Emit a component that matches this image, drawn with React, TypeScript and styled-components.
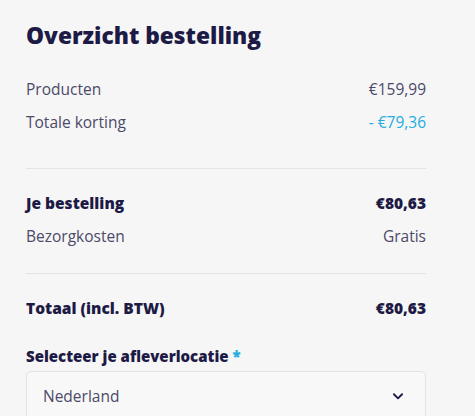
import React from "react";
import styled, { createGlobalStyle } from "styled-components";

const Global = createGlobalStyle`
  html, body { margin: 0; padding: 0; background: #f6f6f6; }
  body { font-family: "Open Sans", "Noto Sans", sans-serif; -webkit-font-smoothing: antialiased; }
`;

const Panel = styled.div`
  width: 400px;
  padding: 20px 26px 0 26px;
  color: #1d1a45;
`;

const Title = styled.h2`
  margin: 0 0 26px 0;
  font-size: 22.7px;
  line-height: 32px;
  font-weight: 800;
  color: #1d1a45;
`;

const Group = styled.div<{ $tail: number }>`
  display: flex;
  flex-direction: column;
  gap: 10px;
  padding: 0 0 ${(p) => p.$tail}px 0;
`;

const Row = styled.div<{ $strong?: boolean }>`
  display: flex;
  justify-content: space-between;
  align-items: center;
  font-size: 15.5px;
  line-height: 23px;
  font-weight: ${(p) => (p.$strong ? 800 : 400)};
  color: ${(p) => (p.$strong ? "#1d1a45" : "#4c4a68")};
`;

const Value = styled.span<{ $accent?: boolean }>`
  color: ${(p) => (p.$accent ? "#23acdf" : "inherit")};
`;

const Divider = styled.hr`
  margin: 0 0 23px 0;
  border: 0;
  border-top: 1px solid #e4e4e6;
`;

const Label = styled.div`
  margin-top: 25px;
  font-size: 15px;
  line-height: 23px;
  font-weight: 800;
  color: #1d1a45;
`;

const Required = styled.span`
  color: #23acdf;
  margin-left: 4px;
`;

const Select = styled.div`
  margin-top: 3px;
  height: 50px;
  box-sizing: border-box;
  border: 1px solid #e3e3e6;
  border-radius: 5px;
  background: #f8f8f8;
  display: flex;
  align-items: center;
  justify-content: space-between;
  padding: 0 20px 0 16px;
  font-size: 15.5px;
  color: #4c4a68;
`;

export default function App() {
  return (
    <>
      <Global />
      <Panel>
        <Title>Overzicht bestelling</Title>
        <Group $tail={34}>
          <Row>
            <span>Producten</span>
            <Value>€159,99</Value>
          </Row>
          <Row>
            <span>Totale korting</span>
            <Value $accent>- €79,36</Value>
          </Row>
        </Group>
        <Divider />
        <Group $tail={25}>
          <Row $strong>
            <span>Je bestelling</span>
            <Value>€80,63</Value>
          </Row>
          <Row>
            <span>Bezorgkosten</span>
            <Value>Gratis</Value>
          </Row>
        </Group>
        <Divider />
        <Row $strong>
          <span>Totaal (incl. BTW)</span>
          <Value>€80,63</Value>
        </Row>
        <Label>
          Selecteer je afleverlocatie<Required>*</Required>
        </Label>
        <Select>
          <span>Nederland</span>
          <svg width="14" height="14" viewBox="0 0 24 24" fill="none" stroke="#1d1a45" strokeWidth="3.2" strokeLinecap="round" strokeLinejoin="round">
            <path d="M5 9l7 7 7-7" />
          </svg>
        </Select>
      </Panel>
    </>
  );
}
